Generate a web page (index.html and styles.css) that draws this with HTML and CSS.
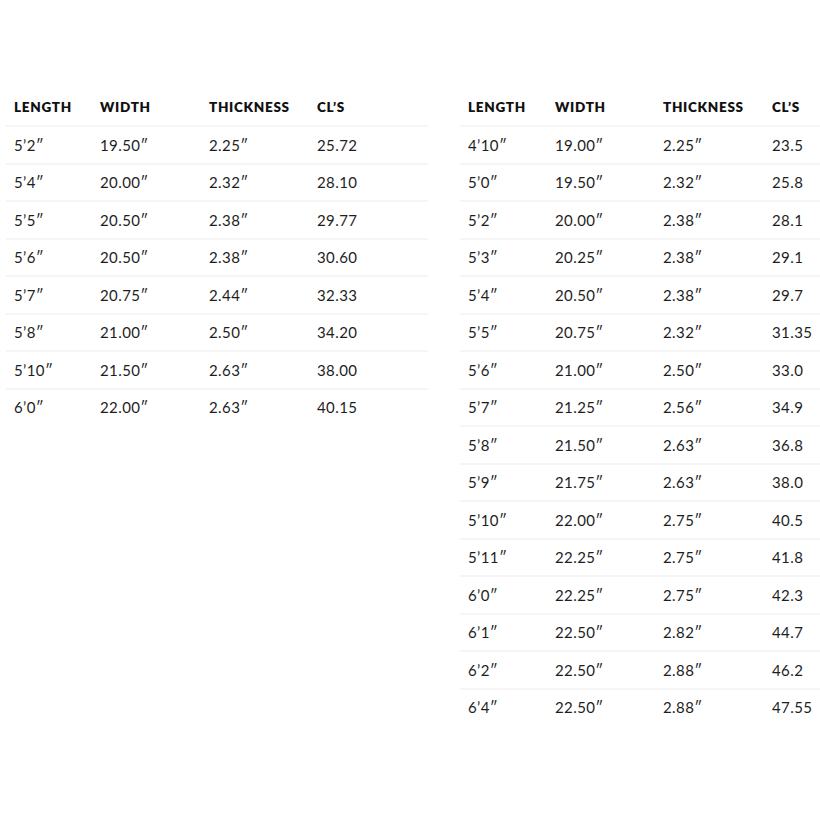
FILE: index.html
```html
<!DOCTYPE html>
<html>
<head>
<meta charset="utf-8">
<link rel="stylesheet" href="styles.css">
</head>
<body>
<div class="page">
  <table class="spec spec-left">
    <colgroup><col class="c1"><col class="c2"><col class="c3"><col class="c4"></colgroup>
    <thead><tr><th>LENGTH</th><th>WIDTH</th><th>THICKNESS</th><th>CL’S</th></tr></thead>
    <tbody>
      <tr><td>5’2″</td><td>19.50″</td><td>2.25″</td><td>25.72</td></tr>
      <tr><td>5’4″</td><td>20.00″</td><td>2.32″</td><td>28.10</td></tr>
      <tr><td>5’5″</td><td>20.50″</td><td>2.38″</td><td>29.77</td></tr>
      <tr><td>5’6″</td><td>20.50″</td><td>2.38″</td><td>30.60</td></tr>
      <tr><td>5’7″</td><td>20.75″</td><td>2.44″</td><td>32.33</td></tr>
      <tr><td>5’8″</td><td>21.00″</td><td>2.50″</td><td>34.20</td></tr>
      <tr><td>5’10″</td><td>21.50″</td><td>2.63″</td><td>38.00</td></tr>
      <tr><td>6’0″</td><td>22.00″</td><td>2.63″</td><td>40.15</td></tr>
    </tbody>
  </table>
  <table class="spec spec-right">
    <colgroup><col class="c1"><col class="c2"><col class="c3"><col class="c4"></colgroup>
    <thead><tr><th>LENGTH</th><th>WIDTH</th><th>THICKNESS</th><th>CL’S</th></tr></thead>
    <tbody>
      <tr><td>4’10″</td><td>19.00″</td><td>2.25″</td><td>23.5</td></tr>
      <tr><td>5’0″</td><td>19.50″</td><td>2.32″</td><td>25.8</td></tr>
      <tr><td>5’2″</td><td>20.00″</td><td>2.38″</td><td>28.1</td></tr>
      <tr><td>5’3″</td><td>20.25″</td><td>2.38″</td><td>29.1</td></tr>
      <tr><td>5’4″</td><td>20.50″</td><td>2.38″</td><td>29.7</td></tr>
      <tr><td>5’5″</td><td>20.75″</td><td>2.32″</td><td>31.35</td></tr>
      <tr><td>5’6″</td><td>21.00″</td><td>2.50″</td><td>33.0</td></tr>
      <tr><td>5’7″</td><td>21.25″</td><td>2.56″</td><td>34.9</td></tr>
      <tr><td>5’8″</td><td>21.50″</td><td>2.63″</td><td>36.8</td></tr>
      <tr><td>5’9″</td><td>21.75″</td><td>2.63″</td><td>38.0</td></tr>
      <tr><td>5’10″</td><td>22.00″</td><td>2.75″</td><td>40.5</td></tr>
      <tr><td>5’11″</td><td>22.25″</td><td>2.75″</td><td>41.8</td></tr>
      <tr><td>6’0″</td><td>22.25″</td><td>2.75″</td><td>42.3</td></tr>
      <tr><td>6’1″</td><td>22.50″</td><td>2.82″</td><td>44.7</td></tr>
      <tr><td>6’2″</td><td>22.50″</td><td>2.88″</td><td>46.2</td></tr>
      <tr><td>6’4″</td><td>22.50″</td><td>2.88″</td><td>47.55</td></tr>
    </tbody>
  </table>
</div>
</body>
</html>
```
FILE: styles.css
```css
html, body {
  margin: 0;
  padding: 0;
  background: #ffffff;
}
body {
  font-family: "Lato", "Open Sans", sans-serif;
  color: #222222;
}
.page {
  display: flex;
  align-items: flex-start;
  padding-top: 88px;
  padding-left: 6px;
  gap: 32px;
}
.spec {
  border-collapse: collapse;
  table-layout: fixed;
}
.spec-left { width: 422px; }
.spec-right { width: 360px; }
.spec-left .c1 { width: 86px; }
.spec-left .c2 { width: 109px; }
.spec-left .c3 { width: 108px; }
.spec-right .c1 { width: 87px; }
.spec-right .c2 { width: 108px; }
.spec-right .c3 { width: 109px; }
.spec th, .spec td {
  padding: 0 0 0 8px;
  text-align: left;
  white-space: nowrap;
}
.spec th {
  height: 37px;
  font-size: 13.5px;
  font-weight: 800;
  color: #111111;
  letter-spacing: 0.7px;
}
.spec td {
  height: 35.5px;
  font-size: 15px;
  font-weight: 400;
  color: #1e1e1e;
  border-top: 2px solid #f5f5f5;
  letter-spacing: 0.4px;
}
```
